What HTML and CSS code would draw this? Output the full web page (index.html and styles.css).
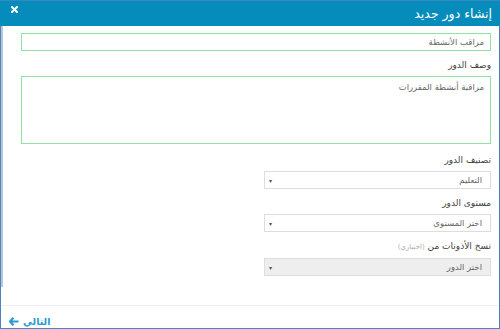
FILE: index.html
```html
<!DOCTYPE html>
<html lang="ar" dir="rtl">
<head>
    <meta charset="UTF-8">
    <meta name="viewport" content="width=device-width, initial-scale=1.0">
    <title>إنشاء دور جديد</title>
    <link rel="stylesheet" href="styles.css">
</head>
<body>
    <div class="modal">
        <header class="modal-header">
            <h1>إنشاء دور جديد</h1>
            <button class="close" aria-label="إغلاق">
                <svg width="7" height="7" viewBox="0 0 7 7"><path d="M1 1L6 6M6 1L1 6" stroke="#fff" stroke-width="2" stroke-linecap="square"/></svg>
            </button>
        </header>
        <div class="modal-body">
            <input type="text" class="field green" value="مراقب الأنشطة">

            <label class="label">وصف الدور</label>
            <textarea class="field green area">مراقبة أنشطة المقررات</textarea>

            <label class="label">تصنيف الدور</label>
            <div class="select">
                <span>التعليم</span>
                <span class="caret">▾</span>
            </div>

            <label class="label">مستوى الدور</label>
            <div class="select">
                <span>اختر المستوى</span>
                <span class="caret">▾</span>
            </div>

            <label class="label">نسخ الأذونات من <small>(اختياري)</small></label>
            <div class="select disabled">
                <span>اختر الدور</span>
                <span class="caret">▾</span>
            </div>
        </div>
        <footer class="modal-footer">
            <a href="#" class="next">التالي
                <svg width="10" height="9" viewBox="0 0 10 9"><path d="M4.5 0.8L1 4.5L4.5 8.2M1.5 4.5H9.5" fill="none" stroke="#2b9bd3" stroke-width="2.2"/></svg>
            </a>
        </footer>
    </div>
</body>
</html>
```

FILE: styles.css
```css
body {
    margin: 0;
    font-family: "DejaVu Sans", sans-serif;
    background: #fff;
    color: #444;
}
.modal {
    width: 500px;
    height: 329px;
    box-sizing: border-box;
    border: 1px solid #4c85c6;
    border-top: none;
    display: flex;
    flex-direction: column;
}
.modal-header {
    height: 26px;
    background: #068cbb;
    border-top: 1px solid #3a86c4;
    box-sizing: border-box;
    display: flex;
    align-items: center;
    justify-content: space-between;
    padding: 0 8px 0 11px;
    margin: 0 -1px;
}
.modal-header h1 {
    margin: 0;
    font-size: 12.5px;
    font-weight: normal;
    color: #fff;
}
.close {
    background: none;
    border: none;
    padding: 0;
    display: flex;
    margin-top: -9px;
}
.modal-body {
    height: 261px;
    box-sizing: border-box;
    border-left: 2px solid #b9c6d6;
    padding: 7px 8px 0 18px;
    display: flex;
    flex-direction: column;
}
.field {
    font-family: inherit;
    font-size: 8.5px;
    color: #666;
    box-sizing: border-box;
    height: 18px;
    padding: 0 6px;
    margin: 0 0 7px;
    outline: none;
    background: #fff;
}
.green {
    border: 1px solid #8fe3a8;
}
.area {
    height: 68px;
    padding: 5px 6px;
    resize: none;
    margin-bottom: 9px;
}
.label {
    font-size: 9px;
    line-height: 14px;
    margin-bottom: 4px;
    color: #3f3f3f;
}
.label small {
    font-size: 7px;
    color: #aaa;
}
.select {
    width: 227px;
    height: 18px;
    box-sizing: border-box;
    border: 1px solid #ddd;
    background: #fff;
    display: flex;
    align-items: center;
    justify-content: space-between;
    padding: 0 8px 0 4px;
    font-size: 8.5px;
    color: #666;
    margin-bottom: 7px;
}
.select.disabled {
    background: #eee;
}
.caret {
    font-size: 6px;
    color: #555;
}
.modal-footer {
    margin-top: 18px;
    border-top: 1px solid #eee;
    padding: 10px 0 0 8px;
    display: flex;
    justify-content: flex-end;
}
.next {
    color: #2b9bd3;
    font-size: 9.5px;
    font-weight: bold;
    text-decoration: none;
    display: flex;
    align-items: center;
    gap: 4px;
}
```
